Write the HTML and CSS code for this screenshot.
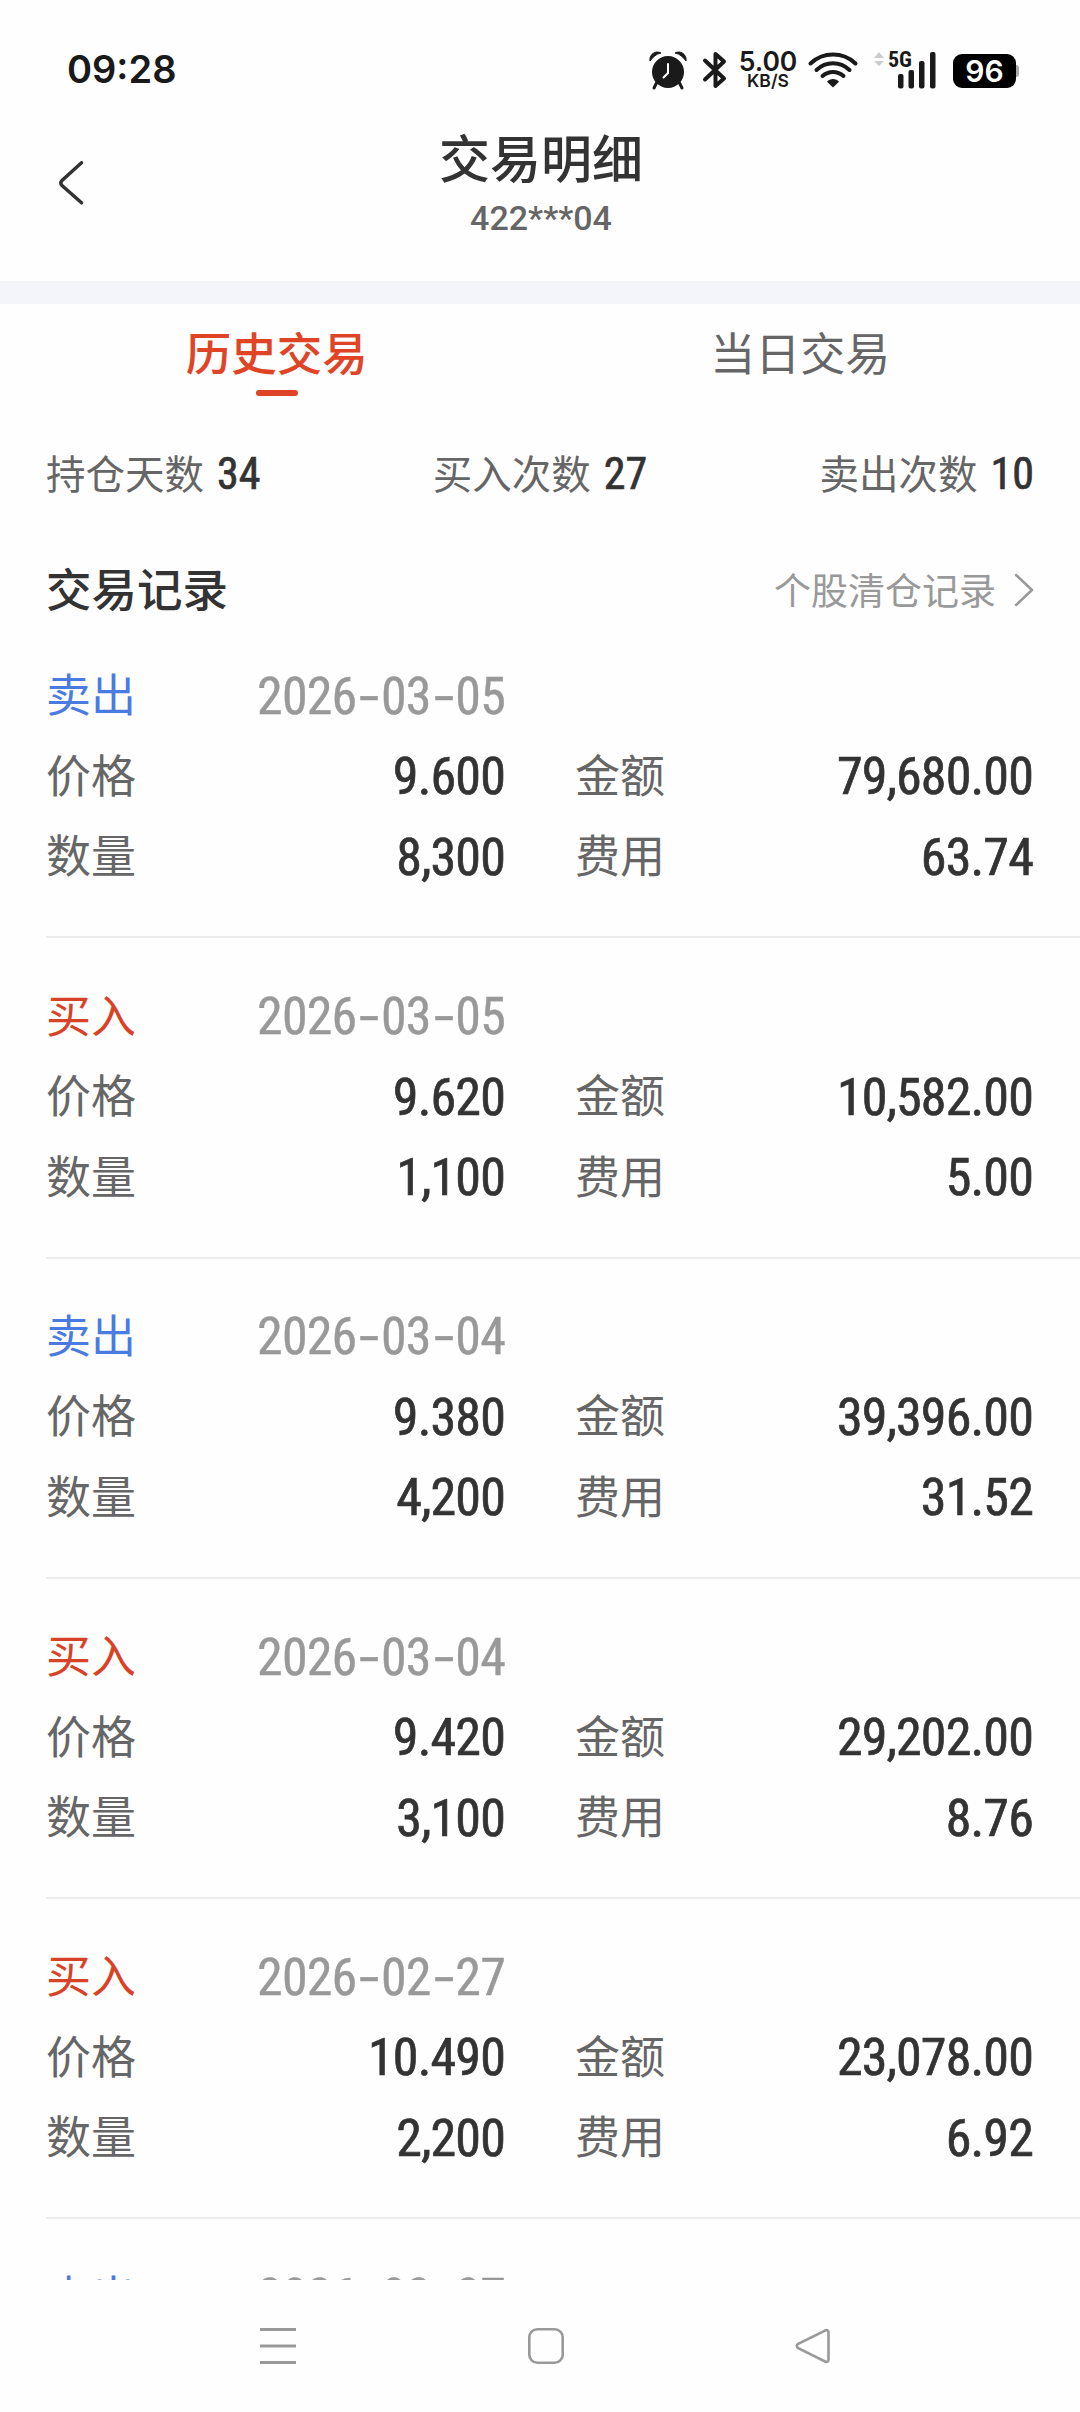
FILE: index.html
```html
<!DOCTYPE html>
<html lang="zh-CN">
<head>
    <meta charset="UTF-8">
    <meta name="viewport" content="width=device-width, initial-scale=1.0">
    <title>交易明细</title>
    <link rel="stylesheet" href="styles.css">
</head>
<body>
    <div class="status-bar">
        <span class="clock">09:28</span>
        <div class="status-icons">
            <svg class="icon-alarm" width="38" height="38" viewBox="0 0 38 38">
                <circle cx="19" cy="21" r="16" fill="#1a1a1a"/>
                <path d="M8 31l-3 6M30 31l3 6" stroke="#1a1a1a" stroke-width="3" stroke-linecap="round"/>
                <path d="M1 10C0 3 7-1 12 2C7 3 4 6 1 10zM37 10C38 3 31-1 26 2C31 3 34 6 37 10z" fill="#1a1a1a" stroke="#1a1a1a" stroke-width="1" stroke-linejoin="round"/>
                <path d="M19 13v9l-4.500 4.500" fill="none" stroke="#fff" stroke-width="2" stroke-linecap="round"/>
            </svg>
            <svg class="icon-bluetooth" width="24" height="38" viewBox="0 0 24 38">
                <path d="M2 9.500L21 27.500L12.500 35V3L21 10.500L2 28.500" fill="none" stroke="#1a1a1a" stroke-width="4" stroke-linecap="round" stroke-linejoin="round"/>
            </svg>
            <div class="net-speed">
                <span class="speed-value">5.00</span>
                <span class="speed-unit">KB/S</span>
            </div>
            <svg class="icon-wifi" width="50" height="38" viewBox="0 0 50 38">
                <g fill="none" stroke="#1a1a1a" stroke-width="4" stroke-linecap="round">
                    <path d="M2.500 12.500C15 0.500 35 0.500 47.500 12.500"/>
                    <path d="M8.500 19C18 10 32 10 41.500 19"/>
                    <path d="M14.500 25C20.500 19.500 29.500 19.500 35.500 25"/>
                </g>
                <path d="M25 36.500L19 30.800C22 27 28 27 31 30.800z" fill="#1a1a1a"/>
            </svg>
            <svg class="icon-signal" width="62" height="38" viewBox="0 0 62 38">
                <path d="M5 1L10 7H0zM0 10H10L5 15z" fill="#ccc"/>
                <text class="net-type" x="14" y="16">5G</text>
                <g fill="#1a1a1a">
                    <rect x="24" y="23" width="5.500" height="14.500" rx="2"/>
                    <rect x="34.500" y="19" width="5.500" height="18.500" rx="2"/>
                    <rect x="45" y="10" width="5.500" height="27.500" rx="2"/>
                    <rect x="56" y="1" width="5.500" height="36.500" rx="2"/>
                </g>
            </svg>
            <span class="battery">96</span>
            <span class="battery-tip"></span>
        </div>
    </div>

    <div class="header">
        <svg class="back" width="25" height="44" viewBox="0 0 25 44">
            <path d="M22.500 1.800L3 19.500Q0.500 22 3 24.500L22.500 41.800" fill="none" stroke="#333" stroke-width="3.500" stroke-linecap="round"/>
        </svg>
        <div class="header-text">
            <h1>交易明细</h1>
            <span class="account">422***04</span>
        </div>
    </div>

    <div class="tabs">
        <div class="tab active">历史交易</div>
        <div class="tab">当日交易</div>
    </div>

    <div class="stats">
        <div class="stat">持仓天数<b>34</b></div>
        <div class="stat">买入次数<b>27</b></div>
        <div class="stat">卖出次数<b>10</b></div>
    </div>

    <div class="section-title">
        <h2>交易记录</h2>
        <div class="more">
            <span>个股清仓记录</span>
            <svg width="20" height="34" viewBox="0 0 20 34">
                <path d="M2 2L18 17L2 32" fill="none" stroke="#999" stroke-width="2.500" stroke-linecap="round" stroke-linejoin="round"/>
            </svg>
        </div>
    </div>

    <div class="records">
        <div class="record">
            <div class="cell"><span class="sell">卖出</span><span class="date">2026<i>-</i>03<i>-</i>05</span></div>
            <div class="cell"></div>
            <div class="cell">价格<span class="num">9.600</span></div>
            <div class="cell">金额<span class="num">79,680.00</span></div>
            <div class="cell">数量<span class="num">8,300</span></div>
            <div class="cell">费用<span class="num">63.74</span></div>
        </div>
        <div class="record">
            <div class="cell"><span class="buy">买入</span><span class="date">2026<i>-</i>03<i>-</i>05</span></div>
            <div class="cell"></div>
            <div class="cell">价格<span class="num">9.620</span></div>
            <div class="cell">金额<span class="num">10,582.00</span></div>
            <div class="cell">数量<span class="num">1,100</span></div>
            <div class="cell">费用<span class="num">5.00</span></div>
        </div>
        <div class="record">
            <div class="cell"><span class="sell">卖出</span><span class="date">2026<i>-</i>03<i>-</i>04</span></div>
            <div class="cell"></div>
            <div class="cell">价格<span class="num">9.380</span></div>
            <div class="cell">金额<span class="num">39,396.00</span></div>
            <div class="cell">数量<span class="num">4,200</span></div>
            <div class="cell">费用<span class="num">31.52</span></div>
        </div>
        <div class="record">
            <div class="cell"><span class="buy">买入</span><span class="date">2026<i>-</i>03<i>-</i>04</span></div>
            <div class="cell"></div>
            <div class="cell">价格<span class="num">9.420</span></div>
            <div class="cell">金额<span class="num">29,202.00</span></div>
            <div class="cell">数量<span class="num">3,100</span></div>
            <div class="cell">费用<span class="num">8.76</span></div>
        </div>
        <div class="record">
            <div class="cell"><span class="buy">买入</span><span class="date">2026<i>-</i>02<i>-</i>27</span></div>
            <div class="cell"></div>
            <div class="cell">价格<span class="num">10.490</span></div>
            <div class="cell">金额<span class="num">23,078.00</span></div>
            <div class="cell">数量<span class="num">2,200</span></div>
            <div class="cell">费用<span class="num">6.92</span></div>
        </div>
        <div class="record">
            <div class="cell"><span class="sell">卖出</span><span class="date">2026<i>-</i>02<i>-</i>27</span></div>
        </div>
    </div>

    <div class="nav-bar">
        <svg width="36" height="36" viewBox="0 0 36 36">
            <path d="M0 1.500H36M0 18H36M0 34.500H36" stroke="#999" stroke-width="3"/>
        </svg>
        <svg width="36" height="36" viewBox="0 0 36 36">
            <rect x="1.300" y="1.300" width="33.400" height="33.400" rx="8" fill="none" stroke="#999" stroke-width="2.600"/>
        </svg>
        <svg width="36" height="36" viewBox="0 0 36 36">
            <path d="M30.500 2.300L3.200 15.800Q0.300 18 3.200 20.200L30.500 33.700Q33.500 34.500 33.500 31.500V4.500Q33.500 1.500 30.500 2.300z" fill="none" stroke="#999" stroke-width="2.600"/>
        </svg>
    </div>
</body>
</html>
```
FILE: styles.css
```css
* {
    margin: 0;
    padding: 0;
    box-sizing: border-box;
}

body {
    width: 1080px;
    height: 2412px;
    overflow: hidden;
    display: flex;
    flex-direction: column;
    background: #fefefe;
    color: #666;
    font-family: Roboto, "Noto Sans CJK SC", sans-serif;
}

svg {
    display: block;
    flex: none;
    overflow: visible;
}

/* 状态栏 */
.status-bar {
    height: 120px;
    padding: 51px 61px 0 67px;
    display: flex;
    justify-content: space-between;
    color: #1a1a1a;
    font-family: Inter, sans-serif;
    font-weight: 600;
}

.clock {
    font-size: 38px;
    line-height: 36px;
}

.status-icons {
    display: flex;
    height: 38px;
}

.icon-bluetooth {
    margin-left: 16px;
}

.net-speed {
    width: 58px;
    margin-left: 12px;
    display: flex;
    flex-direction: column;
    align-items: center;
}

.speed-value {
    font-size: 26.500px;
    line-height: 21px;
}

.speed-unit {
    font-size: 17.500px;
    line-height: 18px;
}

.icon-wifi {
    margin-left: 11px;
}

.icon-signal {
    margin-left: 16px;
}

.net-type {
    font-family: "Roboto Condensed", Roboto, sans-serif;
    font-size: 22px;
    font-weight: 700;
    fill: #1a1a1a;
}

.battery {
    width: 63px;
    height: 34px;
    margin: 3px 0 0 17px;
    border-radius: 9px;
    background: #000;
    color: #fff;
    font-size: 30px;
    line-height: 35px;
    text-align: center;
}

.battery-tip {
    width: 3px;
    height: 12px;
    margin-top: 14px;
    border-radius: 0 3px 3px 0;
    background: #aaa;
}

/* 标题 */
.header {
    height: 184px;
    padding: 8px 57px 0 59px;
    display: flex;
    border-bottom: 23px solid #f4f5fa;
}

.back {
    margin-top: 33px;
}

.header-text {
    flex: 1;
    margin-right: 25px;
    display: flex;
    flex-direction: column;
    align-items: center;
}

h1 {
    font-size: 51px;
    line-height: 65px;
    font-weight: 500;
    color: #333;
}

.account {
    font-size: 34px;
    line-height: 51px;
    font-weight: 500;
}

/* 标签页 */
.tabs {
    height: 116px;
    padding: 0 18px 0 14px;
    display: flex;
}

.tab {
    flex: 1;
    padding-top: 18px;
    display: flex;
    flex-direction: column;
    align-items: center;
    font-size: 45px;
    line-height: 67px;
}

.tab.active {
    padding-left: 1px;
    color: #e04426;
    font-size: 45.500px;
    font-weight: 500;
}

.tab.active::after {
    content: "";
    width: 42px;
    height: 6px;
    margin-top: 1px;
    border-radius: 3px;
    background: #e04426;
}

/* 统计 */
.stats {
    height: 108px;
    padding: 0 46px;
    display: flex;
    justify-content: space-between;
    font-size: 39.500px;
    line-height: 108px;
}

.stat b {
    margin-left: 13px;
    font-family: "Roboto Condensed", Roboto, sans-serif;
    font-size: 44px;
    font-weight: 400;
    -webkit-text-stroke: 0.700px #333;
    color: #333;
}

.section-title {
    height: 56px;
    margin-top: 34px;
    padding: 0 46px;
    display: flex;
    justify-content: space-between;
    align-items: center;
}

h2 {
    padding-top: 3px;
    font-size: 45.500px;
    line-height: 56px;
    font-weight: 500;
    color: #333;
}

.more {
    display: flex;
    align-items: center;
    gap: 18px;
    font-size: 37px;
    color: #999;
}

.more span {
    padding-bottom: 3px;
}

/* 交易记录 */
.records {
    flex: 1;
    min-height: 0;
    padding-left: 46px;
    overflow: hidden;
}

.record {
    height: 320.300px;
    padding: 38px 47px 0 0;
    display: grid;
    grid-template-columns: 459px 458px;
    grid-auto-rows: 80.500px;
    column-gap: 70px;
    border-bottom: 2px solid #ebebeb;
}

.cell {
    padding-bottom: 7px;
    display: flex;
    justify-content: space-between;
    align-items: center;
    font-size: 45px;
}

.sell {
    color: #4a7be0;
}

.buy {
    color: #d84328;
}

.num,
.date {
    margin-top: 7px;
    font-family: "Roboto Condensed", Roboto, sans-serif;
    font-size: 52px;
    letter-spacing: -0.850px;
}

.num {
    color: #333;
    -webkit-text-stroke: 0.700px #333;
}

.date {
    color: #999;
    -webkit-text-stroke: 0.400px #999;
}

.date i {
    display: inline-block;
    width: 24.700px;
    font-style: normal;
    text-align: center;
    transform: scaleX(1.600);
}

/* 底部导航 */
.nav-bar {
    height: 132px;
    padding: 48px 249px 0 260px;
    display: flex;
    justify-content: space-between;
}
```
